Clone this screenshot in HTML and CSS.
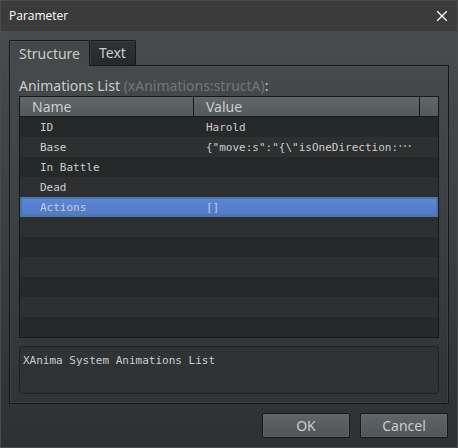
FILE: index.html
```html
<!DOCTYPE html>
<html lang="en">
<head>
<meta charset="utf-8">
<title>Parameter</title>
<link rel="stylesheet" href="styles.css">
</head>
<body>
<div class="dialog" role="dialog" aria-labelledby="dialog-title">
  <header class="titlebar">
    <h1 class="title" id="dialog-title">Parameter</h1>
    <button class="close" type="button" aria-label="Close">
      <svg viewBox="0 0 10 10" width="10" height="10" aria-hidden="true"><path d="M0 0L10 10M10 0L0 10"/></svg>
    </button>
  </header>
  <main class="content">
    <div class="tabs" role="tablist">
      <button class="tab tab-active" type="button" role="tab" id="tab-structure" aria-selected="true" aria-controls="panel">Structure</button>
      <button class="tab" type="button" role="tab" aria-selected="false">Text</button>
    </div>
    <section class="panel" id="panel" role="tabpanel" aria-labelledby="tab-structure">
      <h2 class="heading" id="list-heading">Animations List <span class="muted">(xAnimations:structA)</span>:</h2>
      <div class="list">
        <table class="params" aria-labelledby="list-heading">
          <colgroup><col class="col-name"><col><col class="col-end"></colgroup>
          <thead>
            <tr><th scope="col">Name</th><th scope="col">Value</th><th></th></tr>
          </thead>
          <tbody>
            <tr><td>ID</td><td colspan="2">Harold</td></tr>
            <tr><td>Base</td><td colspan="2">{"move:s":"{\"isOneDirection:<span class="more" lang="ja">⋯</span></td></tr>
            <tr><td>In Battle</td><td colspan="2"></td></tr>
            <tr><td>Dead</td><td colspan="2"></td></tr>
            <tr class="selected"><td>Actions</td><td colspan="2">[]</td></tr>
            <tr><td></td><td colspan="2"></td></tr>
            <tr><td></td><td colspan="2"></td></tr>
            <tr><td></td><td colspan="2"></td></tr>
            <tr><td></td><td colspan="2"></td></tr>
            <tr><td></td><td colspan="2"></td></tr>
            <tr><td></td><td colspan="2"></td></tr>
          </tbody>
        </table>
      </div>
      <textarea class="description" aria-label="Description" readonly>XAnima System Animations List</textarea>
    </section>
    <footer class="actions">
      <button class="action" type="button">OK</button>
      <button class="action" type="button">Cancel</button>
    </footer>
  </main>
</div>
</body>
</html>
```
FILE: styles.css
```css
* {
  box-sizing: border-box;
}

body {
  margin: 0;
  background: #2f3234;
  color: #cbcdcd;
  font: 14px/20px "Noto Sans", sans-serif;
}

button,
textarea {
  margin: 0;
  color: inherit;
  font: inherit;
}

.dialog {
  display: flex;
  flex-direction: column;
  min-height: 100vh;
  border: 1px solid #4a4b4b;
}

.titlebar {
  display: flex;
  align-items: center;
  justify-content: space-between;
  height: 30px;
  padding: 0 10px 0 8px;
  background: #3b3b3b;
  color: #fff;
}

.title {
  margin: 0;
  font-family: "Open Sans", sans-serif;
  font-size: 12px;
  font-weight: 400;
  line-height: 28px;
}

.close {
  display: flex;
  padding: 0;
  border: 0;
  background: none;
}

.close svg {
  fill: none;
  stroke: #fff;
  stroke-width: 1.3;
}

.content {
  flex: 1;
  padding: 9px 8px;
  background: linear-gradient(#494c4e, #2e3133);
}

.tabs {
  display: flex;
}

.tab {
  height: 25px;
  padding: 0 9px;
  border: 1px solid #14181a;
  border-bottom: 0;
  border-left: 0;
  border-radius: 2px 2px 0 0;
  background: linear-gradient(#2f3335, #24282a);
  box-shadow: inset 1px 1px #383c3e;
  line-height: 24px;
}

.tab-active {
  position: relative;
  height: 26px;
  margin-bottom: -1px;
  border-left: 1px solid #14181a;
  background: linear-gradient(#414646, #47494b);
  box-shadow: inset 1px 1px #505355;
}

.panel {
  padding: 10px 9px 9px;
  border: 1px solid #14181a;
  box-shadow: inset 0 0 0 1px #484b4d80;
}

.heading {
  margin: 0;
  font-size: 14px;
  font-weight: 400;
  line-height: 20px;
}

.muted {
  color: #737676;
}

.list {
  border: 1px solid #14181a;
}

.params {
  width: 100%;
  table-layout: fixed;
  border-spacing: 0;
}

.col-name {
  width: 174px;
}

.col-end {
  width: 18px;
}

.params th {
  height: 20px;
  padding: 0 12px;
  border-right: 1px solid #14181a;
  border-bottom: 1px solid #14181a;
  background: linear-gradient(#62676a, #535a5b);
  font-weight: 400;
  line-height: 19px;
  text-align: left;
}

.params th:last-child {
  padding: 0;
  border-right: 0;
}

.params td {
  height: 20px;
  padding: 2px 12px 0;
  font: 11px/18px "DejaVu Sans Mono", monospace;
  white-space: nowrap;
}

.params td:first-child {
  padding-left: 20px;
}

.params tbody tr {
  background: #25292a;
}

.params tbody tr:nth-child(even) {
  background: #2d2f30;
}

.params tbody .selected {
  background: linear-gradient(#5c88d8, #5078c4);
  box-shadow: inset 0 0 0 2px #4878a8;
}

.more {
  font: 14px/1px "Noto Sans CJK JP", sans-serif;
}

.description {
  display: block;
  width: 100%;
  height: 48px;
  margin-top: 8px;
  padding: 4px 3px;
  border: 1px solid #1e2224;
  border-radius: 4px;
  background: #303335;
  font: 11px/20px "DejaVu Sans Mono", monospace;
  resize: none;
}

.actions {
  display: flex;
  justify-content: flex-end;
  gap: 10px;
  margin-top: 9px;
  padding-right: 1px;
}

.action {
  width: 88px;
  height: 25px;
  padding: 0;
  border: 1px solid #14181a;
  border-radius: 2px;
  background: linear-gradient(#616567, #505456);
  box-shadow: inset 0 0 0 1px #686c6e80;
}
```
